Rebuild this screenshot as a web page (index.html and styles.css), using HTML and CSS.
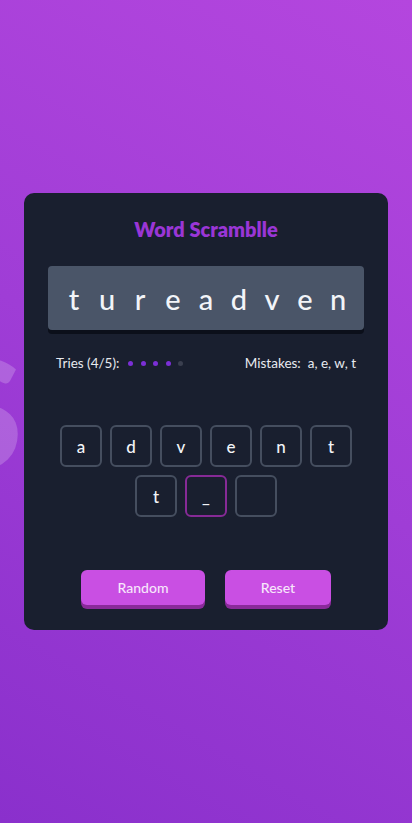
FILE: index.html
```html
<!DOCTYPE html>
<html lang="en">
<head>
<meta charset="utf-8">
<title>Word Scramble</title>
<link rel="stylesheet" href="styles.css">
</head>
<body>
<div class="bg-letter" aria-hidden="true"></div>
<main class="card">
  <h1 class="title">Word Scramblle</h1>
  <div class="scramble">
    <span>t</span><span>u</span><span>r</span><span>e</span><span>a</span><span>d</span><span>v</span><span>e</span><span>n</span>
  </div>
  <div class="status">
    <div class="tries">
      <span>Tries (4/5):</span>
      <span class="dots"><i class="dot on"></i><i class="dot on"></i><i class="dot on"></i><i class="dot on"></i><i class="dot"></i></span>
    </div>
    <div class="mistakes"><span>Mistakes:</span><span>a, e, w, t</span></div>
  </div>
  <div class="grid">
    <div class="cell">a</div>
    <div class="cell">d</div>
    <div class="cell">v</div>
    <div class="cell">e</div>
    <div class="cell">n</div>
    <div class="cell">t</div>
    <div class="cell">t</div>
    <div class="cell active">_</div>
    <div class="cell"></div>
  </div>
  <div class="actions">
    <button class="btn btn-random">Random</button>
    <button class="btn btn-reset">Reset</button>
  </div>
</main>
</body>
</html>
```
FILE: styles.css
```css
* { box-sizing: border-box; }
html, body { margin: 0; padding: 0; }
body {
  width: 412px;
  height: 823px;
  overflow: hidden;
  position: relative;
  font-family: "Lato", "Noto Sans", sans-serif;
  background: linear-gradient(30deg, #8a30cc 0%, #9f3dd6 50%, #b446de 100%);
  display: flex;
  align-items: center;
  justify-content: center;
}
.bg-letter {
  position: absolute;
  left: -60px;
  top: 336px;
  font-size: 150px;
  font-weight: 900;
  line-height: 1;
  color: rgba(255, 255, 255, 0.2);
}
.bg-letter::before { content: "S"; }
.card {
  position: relative;
  width: 364px;
  height: 437px;
  background: #191f2f;
  border-radius: 10px;
  padding: 24px 24px 25px;
  display: flex;
  flex-direction: column;
}
.title {
  margin: 0;
  height: 24px;
  line-height: 24px;
  font-size: 20px;
  font-weight: 800;
  color: #9a36d6;
  text-align: center;
}
.scramble {
  margin-top: 25px;
  height: 64px;
  background: #4a5568;
  border-radius: 4px;
  box-shadow: 0 4px 0 #0b0f1a;
  display: flex;
  align-items: center;
  justify-content: center;
  color: #f2f4f8;
  font-size: 29px;
  font-weight: 500;
}
.scramble span {
  width: 33px;
  text-align: center;
}
.status {
  margin-top: 23px;
  height: 20px;
  padding: 0 8px;
  display: flex;
  align-items: center;
  justify-content: space-between;
  color: #e8eaf0;
  font-size: 13.5px;
}
.tries { display: flex; align-items: center; gap: 9px; }
.dots { display: flex; gap: 7.5px; }
.dot { width: 5px; height: 5px; border-radius: 50%; background: #3a3f4f; }
.dot.on { background: #7b2fd6; }
.mistakes { display: flex; gap: 7px; }
.grid {
  margin-top: 52px;
  display: flex;
  flex-wrap: wrap;
  justify-content: center;
  gap: 8px;
  padding: 0 12px;
}
.cell {
  width: 42px;
  height: 42px;
  border: 2px solid #454e5f;
  border-radius: 6px;
  display: flex;
  align-items: center;
  justify-content: center;
  color: #f2f4f8;
  font-size: 17px;
  font-weight: 500;
}
.cell.active { border-color: #862a96; }
.actions {
  margin-top: 53px;
  display: flex;
  justify-content: center;
  gap: 20px;
}
.btn {
  height: 35px;
  border: 0;
  border-radius: 6px;
  background: #c94fe3;
  box-shadow: 0 4px 0 #8a2a9a;
  color: #f7e6fb;
  font-family: inherit;
  font-size: 14px;
  font-weight: 500;
  padding: 0;
}
.btn-random { width: 124px; }
.btn-reset { width: 106px; }
```
